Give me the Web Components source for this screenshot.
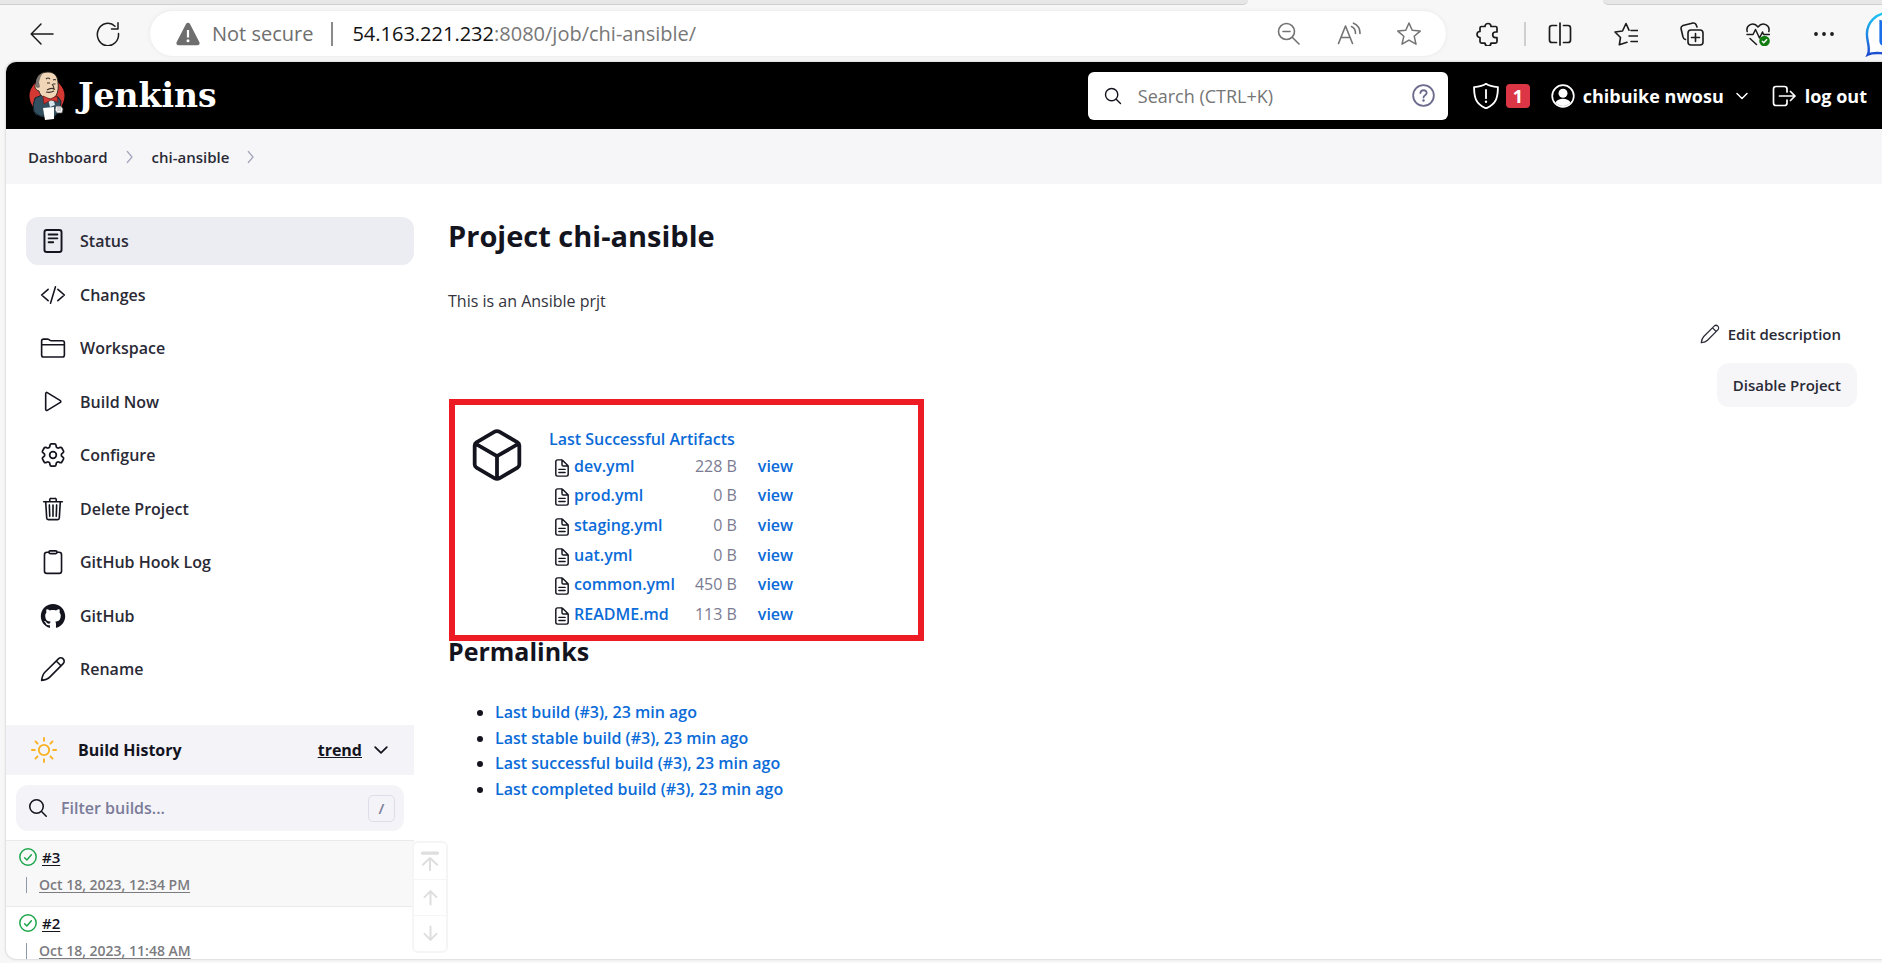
<!DOCTYPE html>
<html lang="en">
<head>
<meta charset="utf-8">
<title>chi-ansible [Jenkins]</title>
<style>
html,body{margin:0;height:100%}
body{font-family:"Open Sans","Noto Sans",sans-serif;font-size:16px;color:#14141f;background:#f7f7f7;overflow:hidden}
</style>
</head>
<body>
<app-window></app-window>
<script>
const S=(w,d)=>`<g fill="none" stroke="currentColor" stroke-width="${w}" stroke-linecap="round" stroke-linejoin="round">${d}</g>`;
const ICONS={
 back:['0 0 24 24',S(1.5,'<path d="M23 12H1.500M11 2 1.200 12 11 22"/>')],
 reload:['0 0 24 24',S(1.5,'<path d="M22.500 11.500A10.600 11.200 0 1 1 19 4.200M22 .8V7H15.500"/>')],
 warn:['0 0 24 24','<path fill="currentColor" d="M12 .8c.9 0 1.500.4 2 1.200l9.300 18c.8 1.600-.1 3.200-1.900 3.200H2.600C.8 23.200-.1 21.600.7 20L10 2c.5-.8 1.100-1.200 2-1.200z"/><path d="M12 8v7.500" stroke="#fff" stroke-width="2.200"/><circle cx="12" cy="18.700" r="1.500" fill="#fff"/>'],
 zoomout:['0 0 24 24',S(1.6,'<circle cx="9.500" cy="9.500" r="8"/><path d="M6 9.500h7M15.500 15.500 22 22"/>')],
 readaloud:['0 0 24 24',S(1.6,'<path d="M1.500 21.500 8.500 4l7 17.500M4 15.500h9M14.500 4.500c2.500 1 4 3.500 4 7M16.500 1.200c4.500 1.800 6.500 5.500 6.500 10.300"/>')],
 star:['0 0 24 24',S(1.5,'<path d="m12 1 3.200 7.300 8 .8-6 5.200 1.800 7.900-7-4.100-7 4.100 1.800-7.900-6-5.200 8-.8z"/>')],
 puzzle:['0 0 24 24',S(1.7,'<path d="M9 4.500a3 3 0 0 1 6 0h4.500q1.500 0 1.500 1.500v4h-1.500a2.800 2.800 0 0 0 0 5.600H21v4q0 1.500-1.500 1.500H15a3 3 0 0 1-6 0H5.500Q4 21.100 4 19.600V15.500a3 3 0 0 1 0-6V6q0-1.500 1.500-1.500z"/>')],
 split:['0 0 24 24',S(1.7,'<path d="M12 1v22M8.500 3.500H4Q1.500 3.500 1.500 6v12q0 2.500 2.500 2.500h4.500M15.500 3.500H20q2.500 0 2.500 2.500v12q0 2.500-2.500 2.500h-4.500"/>')],
 favs:['0 0 24 24',S(1.6,'<path d="M13 20.200 5.300 22.800 6.500 15.500 1 10l7.500-1L12 1.500l3 6.700M17 8.500h6.500M15 14h8.500M17 19.500h6.500"/>')],
 collections:['0 0 24 24',S(1.6,'<rect x="8" y="8" width="15" height="15" rx="3"/><path d="M15.500 11.500v8M11.500 15.500h8M5.500 17.500C3.500 17 3.300 16 3 15L1 6.500Q.8 4.500 3 3.500L13 1q2-.3 3 1.500l1 2.500"/>')],
 heart:['0 0 24 24',S(1.5,'<path d="M1.200 9.500C-.5 3 7.500-.8 12 5c4.500-5.800 12.500-2 10.800 4.500M1 12.500h6l2.500-5 4 8.500 3-6 1 2.500h6M4 16.500l6.500 6"/>')+'<circle cx="18.500" cy="19" r="5.300" fill="#107c10"/><path d="m16 19 1.800 1.800 3.200-3.500" fill="none" stroke="#fff" stroke-width="1.400"/>'],
 dots:['0 0 24 24','<g fill="currentColor"><circle cx="4" cy="12" r="1.900"/><circle cx="12" cy="12" r="1.900"/><circle cx="20" cy="12" r="1.900"/></g>'],
 bing:['0 0 48 48','<defs><linearGradient id="b" x1="0" y1="0" x2="0" y2="1"><stop offset="0" stop-color="#1fc8f5"/><stop offset="1" stop-color="#1b4bd0"/></linearGradient></defs><path d="M24 2a22 22 0 0 1 0 42c-6 1-14-2-21 1.500C6 39 2 33 2 24A22 22 0 0 1 24 2z" fill="#fff" stroke="url(#b)" stroke-width="2.500"/><path d="M15 9l8 3v25l-5-1q-3-1-3-5z" fill="#1a6fe8"/>'],
 search:['0 0 512 512',S(36,'<path d="M221.090 64a157.090 157.090 0 1 0 157.090 157.090A157.100 157.100 0 0 0 221.090 64zM338.290 338.290 448 448"/>')],
 help:['0 0 24 24',S(1.9,'<circle cx="12" cy="12" r="10.800"/><path d="M8.800 9.400c.3-4 6.700-3.700 6.500 0-.1 2.400-3.300 2.300-3.300 4.800"/>')+'<circle cx="12" cy="17.300" r="1.300" fill="currentColor"/>'],
 shield:['0 0 24 24',S(1.7,'<path d="M12 .8C9 3 5 3.600 1 3.800c0 9 1 15 11 19.700 10-4.700 11-10.700 11-19.700C19 3.600 15 3 12 .8zM12 6.500v7.500"/>')+'<circle cx="12" cy="17.300" r="1.100" fill="currentColor"/>'],
 user:['0 0 24 24',S(1.7,'<circle cx="12" cy="12" r="10.800"/>')+'<circle cx="12" cy="9.300" r="4.500" fill="currentColor"/><path d="M4.500 18.500c2.500-5 12.500-5 15 0A10 10 0 0 1 4.500 18.500z" fill="currentColor"/>'],
 down:['0 0 24 24',S(3,'<path d="m2 7 10 10L22 7"/>')],
 right:['0 0 512 512',S(40,'<path d="m170 80 150 176-150 176"/>')],
 logout:['0 0 24 24',S(1.7,'<path d="M15 8V5q0-2.500-2.500-2.500H4Q1.500 2.500 1.500 5v14q0 2.500 2.500 2.500h8.500Q15 21.500 15 19v-3M7.500 12H23M18.500 7.500 23 12l-4.500 4.500"/>')],
 reader:['0 0 512 512',S(38,'<rect x="88" y="38" width="336" height="436" rx="44"/><path d="M170 128h172M170 204h172M170 280h90"/>')],
 code:['0 0 512 512',S(32,'<path d="M160 368 32 256l128-112M352 368l128-112-128-112M304 96l-96 320"/>')],
 folder:['0 0 512 512',S(32,'<path d="M440 432H72a40 40 0 0 1-40-40V120a40 40 0 0 1 40-40h75.890a40 40 0 0 1 22.190 6.720l27.840 18.560A40 40 0 0 0 220.110 112H440a40 40 0 0 1 40 40v240a40 40 0 0 1-40 40zM32 192h448"/>')],
 play:['0 0 512 512',S(32,'<path d="M112 91v310c0 17.440 17 28.520 31 20.160l257.900-158.370c12.120-7.250 12.120-26.330 0-33.580L143 70.840c-14-8.360-31 2.720-31 20.160z"/>')],
 gear:['1.500 1.500 21 21',S(1.4,'<path d="M9.594 3.940c.09-.542.56-.94 1.110-.94h2.593c.55 0 1.020.398 1.110.94l.213 1.281c.063.374.313.686.645.87.074.04.147.083.22.127.324.196.72.257 1.075.124l1.217-.456a1.125 1.125 0 0 1 1.370.49l1.296 2.247a1.125 1.125 0 0 1-.26 1.431l-1.003.827c-.293.24-.438.613-.431.992a6.759 6.759 0 0 1 0 .255c-.007.378.138.75.43.99l1.005.828c.424.35.534.954.26 1.430l-1.298 2.247a1.125 1.125 0 0 1-1.369.491l-1.217-.456c-.355-.133-.75-.072-1.076.124a6.570 6.570 0 0 1-.22.128c-.331.183-.581.495-.644.869l-.213 1.280c-.09.543-.56.941-1.110.941h-2.594c-.55 0-1.020-.398-1.110-.94l-.213-1.281c-.062-.374-.312-.686-.644-.87a6.520 6.520 0 0 1-.22-.127c-.325-.196-.72-.257-1.076-.124l-1.217.456a1.125 1.125 0 0 1-1.369-.49l-1.297-2.247a1.125 1.125 0 0 1 .26-1.431l1.004-.827c.292-.24.437-.613.43-.992a6.932 6.932 0 0 1 0-.255c.007-.378-.138-.75-.43-.99l-1.004-.828a1.125 1.125 0 0 1-.26-1.430l1.297-2.247a1.125 1.125 0 0 1 1.370-.491l1.216.456c.356.133.751.072 1.076-.124.072-.044.146-.087.22-.128.332-.183.582-.495.644-.869l.214-1.281z"/><circle cx="12" cy="12" r="2.700"/>')],
 trash:['0 0 512 512',S(32,'<path d="m112 112 20 320c.95 18.490 14.400 32 32 32h184c17.670 0 30.870-13.510 32-32l20-320M72 112h368M192 112V72a23.930 23.930 0 0 1 24-24h80a23.930 23.930 0 0 1 24 24v40M256 176v224M184 176l8 224M328 176l-8 224"/>')],
 clipboard:['0 0 512 512',S(32,'<path d="M336 64h40a48 48 0 0 1 48 48v320a48 48 0 0 1-48 48H136a48 48 0 0 1-48-48V112a48 48 0 0 1 48-48h40"/><rect x="176" y="36" width="160" height="56" rx="26"/>')],
 github:['-.8 -.8 25.600 25.600','<path fill="currentColor" d="M12 .297c-6.630 0-12 5.373-12 12 0 5.303 3.438 9.800 8.205 11.385.6.113.82-.258.82-.577 0-.285-.01-1.040-.015-2.040-3.338.724-4.042-1.610-4.042-1.610C4.422 18.070 3.633 17.700 3.633 17.700c-1.087-.744.084-.729.084-.729 1.205.084 1.838 1.236 1.838 1.236 1.070 1.835 2.809 1.305 3.495.998.108-.776.417-1.305.76-1.605-2.665-.3-5.466-1.332-5.466-5.930 0-1.310.465-2.380 1.235-3.220-.135-.303-.54-1.523.105-3.176 0 0 1.005-.322 3.300 1.230.96-.267 1.980-.399 3-.405 1.020.006 2.040.138 3 .405 2.280-1.552 3.285-1.230 3.285-1.230.645 1.653.24 2.873.12 3.176.765.84 1.230 1.910 1.230 3.220 0 4.610-2.805 5.625-5.475 5.920.42.36.81 1.096.81 2.220 0 1.606-.015 2.896-.015 3.286 0 .315.21.69.825.57C20.565 22.092 24 17.592 24 12.297c0-6.627-5.373-12-12-12"/>'],
 pencil:['0 0 24 24',S(1.5,'<path d="M1.500 22.500C2 19 3 16.500 4.500 15L17 2.600a3.100 3.100 0 0 1 4.400 4.400L9 19.500c-1.500 1.500-4 2.500-7.500 3zM15 4.600 19.400 9"/>')],
 sun:['0 0 24 24',S(1.7,'<circle cx="12" cy="12" r="4.800"/><path d="M12 .9v2.600M12 20.500v2.600M.9 12h2.600M20.500 12h2.600M4.100 4.100 6 6M18 18l1.900 1.900M4.100 19.900 6 18M18 6l1.900-1.900"/>')],
 ok:['0 0 24 24',S(2,'<circle cx="12" cy="12" r="10.900"/><path d="m7.500 13 3 3 6-7"/>')],
 doc:['84 36 344 440',S(36,'<path d="M408 215V412a44 44 0 0 1-44 44H148a44 44 0 0 1-44-44V100a44 44 0 0 1 44-44h100a32 32 0 0 1 20 8l132 132a32 32 0 0 1 8 19zM256 60v116a32 32 0 0 0 32 32h114M180 290h152M180 368h152"/>')],
 cube:['32 24 448 464',S(34,'<path d="M456 341.370V170.610A32 32 0 0 0 440 143l-160-94a47.940 47.940 0 0 0-48.240 0L72 143a32 32 0 0 0-16 27.610v170.760A32 32 0 0 0 72 369l160 94a48 48 0 0 0 48.240 0l160-94A32 32 0 0 0 456 341.370zM62 155l194 112 194-112M256 470V267"/>')],
 top:['0 0 24 24',S(2.4,'<path d="M3 2.500h18" stroke-width="4"/><path d="M12 9v14M3.500 16.500 12 8.500l8.500 8"/>')],
 up:['0 0 24 24',S(2.8,'<path d="M12 3v19M3.500 11.500 12 3l8.500 8.500"/>')],
 downarrow:['0 0 24 24',S(2.8,'<path d="M12 2v19M3.500 12.500 12 21l8.500-8.500"/>')],
 butler:['0 0 36 50',`<ellipse cx="18" cy="25" rx="17.500" ry="17.500" fill="#d33833"/>
 <path d="M7 35 6 43l7 3 12 1 4-6 1-8z" fill="#335061"/>
 <path d="M13 24 6 27q-3 7-1 14l6 4 14 1 6-7 1-9-3-4-7-2z" fill="#335061" stroke="#14222b"/>
 <path d="M7 12C8 4 13 1 19 1c7 0 10 5 10 11 1 7-1 15-7 16-6 0-11-3-12-8-4-1-5-5-3-8z" fill="#f0d6b7" stroke="#26211d" stroke-width=".9"/>
 <path d="M7 12c0-5 3-9 7-10-3 4-3 6-4 9l1 5-2 1c-2 0-3-3-2-5z" fill="#7d7470"/>
 <path d="M17 8q2-2 4 0M24 9q2-1 3 0M18 12h3M24 13h2.500M23 13q3 4 1 5M17 21q4 1 8-1M18 19q4-3 8-.500" fill="none" stroke="#3a302a" stroke-width="1.100"/>
 <path d="m19 28 5-1 2 7-5 2z" fill="#d7e4ea"/>
 <path d="m14 25 7 3 7-3 1 6-7-2-7 4z" fill="#d33833" stroke="#701814" stroke-width=".7"/>
 <path d="m14 37 11-1v12l-9 1z" fill="#fff"/><path d="M27 35h5l2 3-1 4-5 0-2-3z" fill="#f3f3f3" stroke="#555" stroke-width=".7"/><path d="M29 35v5M31 35v5" stroke="#888" stroke-width=".6"/>`]
};
const define=(name,html,setup)=>{
  const t=document.createElement('template');
  t.innerHTML='<style>*{box-sizing:border-box}a{color:inherit;text-decoration:none}button{font:inherit;color:inherit;background:none;border:0;padding:0;margin:0;display:inline-flex;align-items:center;flex:none}ul{list-style:none;margin:0;padding:0}</style>'+html;
  customElements.define(name,class extends HTMLElement{
    constructor(){super();this.attachShadow({mode:'open'}).append(t.content.cloneNode(true));}
    connectedCallback(){if(setup)setup(this,this.shadowRoot);}
  });
};

define('ui-icon','<style>:host{display:inline-flex;flex:none}svg{display:block;width:100%;height:100%}</style><svg aria-hidden="true"></svg>',(el,r)=>{
  const [box,art]=ICONS[el.getAttribute('name')];
  const s=el.getAttribute('size')||24;
  el.style.width=s+'px';el.style.height=(el.getAttribute('tall')||s)+'px';
  const svg=r.querySelector('svg');svg.setAttribute('viewBox',box);svg.innerHTML=art;
});

define('tab-strip',`<style>
:host{display:flex;height:5px;justify-content:space-between}
i{background:#e7e7e7;border-bottom:1px solid #cfcfcf}
.l{width:66.300%;border-bottom-right-radius:5px}.r{width:14.800%;border-bottom-left-radius:5px}
</style><i class="l"></i><i class="r"></i>`);

define('browser-bar',`<style>
:host{display:flex;align-items:center;height:57px;overflow:hidden;padding-left:30px;color:#1b1b1b}
.nav{display:flex;gap:42px;margin-right:30px}
.pill{flex:1;display:flex;align-items:center;height:45px;background:#fff;border-radius:23px;padding:0 25px 0 26px;font-size:20px;line-height:28px;color:#6e6e6e;box-shadow:0 0 4px #e6e6e6}
.ns{margin-left:12px}
.bar{width:2px;height:24px;background:#8a8a8a;margin:0 19px 0 18px}
.url{flex:1;display:flex;color:#777}.url b{font-weight:400;color:#111}
.in{display:flex;gap:36px;color:#737373}
.tools{display:flex;align-items:center;margin-left:30px;gap:42px}
.tools .sep{width:2px;height:24px;background:#cfcfcf;margin:0 -20px 0 -18px}
.bing{width:17px;margin-left:29px;overflow:hidden}
</style>
<div class="nav"><button aria-label="Back"><ui-icon name="back"></ui-icon></button><button aria-label="Reload"><ui-icon name="reload"></ui-icon></button></div>
<div class="pill"><ui-icon name="warn"></ui-icon><span class="ns">Not secure</span><span class="bar"></span><span class="url"><b>54.163.221.232</b><span>:8080/job/chi-ansible/</span></span>
<span class="in"><button aria-label="Zoom out"><ui-icon name="zoomout"></ui-icon></button><button aria-label="Read aloud"><ui-icon name="readaloud"></ui-icon></button><button aria-label="Favourite"><ui-icon name="star"></ui-icon></button></span></div>
<div class="tools"><button aria-label="Extensions"><ui-icon name="puzzle"></ui-icon></button><span class="sep"></span><button aria-label="Split screen"><ui-icon name="split"></ui-icon></button><button aria-label="Favourites"><ui-icon name="favs"></ui-icon></button><button aria-label="Collections"><ui-icon name="collections"></ui-icon></button><button aria-label="Health"><ui-icon name="heart"></ui-icon></button><button aria-label="More"><ui-icon name="dots"></ui-icon></button></div>
<button class="bing" aria-label="Chat"><ui-icon name="bing" size="46"></ui-icon></button>`);

define('jenkins-header',`<style>
:host{display:flex;align-items:center;height:67px;background:#000;color:#fff;padding:0 15px 0 23px;font-size:18px;line-height:24px;font-weight:700}
.logo{display:flex;align-items:center;gap:13px;margin-right:auto;font:bold 33px/44px "DejaVu Serif",serif}
.find{display:flex;align-items:center;width:360px;height:48px;background:#fff;border-radius:6px;padding:0 13px 0 15px;color:#14141f;margin-right:25px}
input{flex:1;min-width:0;border:0;background:none;font:400 18px/24px "Open Sans",sans-serif;margin-left:15px;padding:0;outline:0}
input::placeholder{color:#757575;opacity:1}
.help{color:#6b6b8e}
.badge{background:#dc3545;border-radius:4px;width:24px;height:24px;text-align:center;margin-left:7px}
.user{margin-left:21px;gap:8px;display:flex;align-items:center}.user ui-icon:last-child{margin-left:4px}
.out{margin-left:24px;gap:9px;display:flex;align-items:center}
.sh{display:flex;align-items:center}
</style>
<a class="logo" href="#"><ui-icon name="butler" size="36" tall="50"></ui-icon>Jenkins</a>
<label class="find"><ui-icon name="search" size="20"></ui-icon><input type="search" aria-label="Search" placeholder="Search (CTRL+K)"><ui-icon class="help" name="help" size="23"></ui-icon></label>
<a class="sh" href="#"><ui-icon name="shield" size="26"></ui-icon><span class="badge">1</span></a>
<a class="user" href="#"><ui-icon name="user"></ui-icon>chibuike nwosu<ui-icon name="down" size="12"></ui-icon></a>
<a class="out" href="#"><ui-icon name="logout"></ui-icon>log out</a>`);

define('bread-crumbs',`<style>
:host{display:flex;align-items:center;height:55px;padding-left:22px;background:#f6f6f9;font-size:15px;line-height:24px;font-weight:600;gap:14px}
ui-icon{color:#a5a5bb}
a{color:#2a2a36}
</style><a href="#">Dashboard</a><ui-icon name="right" size="16"></ui-icon><a href="#">chi-ansible</a><ui-icon name="right" size="16"></ui-icon>`);

define('side-task',`<style>
:host{display:block}
a{display:flex;align-items:center;gap:14px;height:48px;padding-left:14px;border-radius:12px;font-size:16px;line-height:24px;font-weight:600}
span{color:#2a2a36}
:host([active]) a{background:#ecedf3}
</style><a href="#"><span><slot></slot></span></a>`,(el,r)=>{
  const n=document.createElement('ui-icon');
  n.setAttribute('name',el.getAttribute('icon'));n.setAttribute('size','26');r.querySelector('a').prepend(n);
});

define('build-row',`<style>
:host{display:block;height:66px;border-top:1px solid #eaeaec;padding:4px 13px 0}
:host([shade]){background:#f8f8f8}
div{display:flex;align-items:center;height:24px}
.a{font-size:15px;font-weight:600;gap:5px}.a ui-icon{color:#1ea64b}
.b{font-size:14px;color:#7b7b80;font-weight:600;margin-top:4px}
.b i{width:1px;height:16px;background:#8d99a6;margin:0 12px 0 7px}
a{text-decoration:underline;line-height:20px;text-underline-offset:2px}
</style><div class="a"><ui-icon name="ok" size="18"></ui-icon><a href="#"><slot></slot></a></div>
<div class="b"><i></i><a href="#"><slot name="date"></slot></a></div>`);

define('build-history',`<style>
:host{display:block}
header{display:flex;align-items:center;height:50px;background:#f3f3f8;padding:0 26px 0 25px;font-size:16px;line-height:24px;font-weight:700}
header a{text-decoration:underline;margin-left:auto;margin-right:12px}
.sun{color:#fbb11f;margin-right:21px}
label{display:flex;align-items:center;height:46px;margin:10px 10px 9px;padding:0 9px 0 11px;background:#f3f3f8;border-radius:12px}
input{flex:1;min-width:0;border:0;background:none;outline:0;padding:0;margin-left:12px;font:600 16px/24px "Open Sans",sans-serif}
input::placeholder{color:#7b7b99;opacity:1}
kbd{width:27px;height:27px;border:1px solid #dedee8;border-radius:5px;font:600 15px/24px "Open Sans",sans-serif;text-align:center;color:#7b7b99}
</style>
<header><ui-icon class="sun" name="sun" size="26"></ui-icon>Build History<a href="#">trend</a><ui-icon name="down" size="14"></ui-icon></header>
<label><ui-icon name="search" size="22"></ui-icon><input type="search" aria-label="Filter builds" placeholder="Filter builds..."><kbd>/</kbd></label>
<slot></slot>`);

define('history-pager',`<style>
:host{display:block;width:36px;border:2px solid #f5f5f5;border-radius:6px;background:#fff;color:#dedede}
button{display:flex;width:100%;height:36px;justify-content:center}button+button{border-top:1px solid #f5f5f5}
</style><button aria-label="Newest"><ui-icon name="top" size="20"></ui-icon></button><button aria-label="Newer"><ui-icon name="up" size="17"></ui-icon></button><button aria-label="Older"><ui-icon name="downarrow" size="17"></ui-icon></button>`);

define('side-panel',`<style>
:host{display:block;width:408px;position:relative}
nav{display:flex;flex-direction:column;justify-content:space-between;height:476px;margin:33px 0 32px 20px}
history-pager{position:absolute;left:406px;top:657px}
</style>
<nav><side-task icon="reader" active>Status</side-task><side-task icon="code">Changes</side-task><side-task icon="folder">Workspace</side-task><side-task icon="play">Build Now</side-task><side-task icon="gear">Configure</side-task><side-task icon="trash">Delete Project</side-task><side-task icon="clipboard">GitHub Hook Log</side-task><side-task icon="github">GitHub</side-task><side-task icon="pencil">Rename</side-task></nav>
<build-history><build-row shade>#3<span slot="date">Oct 18, 2023, 12:34 PM</span></build-row><build-row>#2<span slot="date">Oct 18, 2023, 11:48 AM</span></build-row></build-history>
<history-pager></history-pager>`);

define('artifact-list',`<style>
:host{display:flex;width:475px;height:242px;border:6px solid #ed1c24;padding:20px 0 0 17px;margin-left:1px}
.t{display:block;font-size:16px;line-height:28px;font-weight:600;color:#0b6bd8}
.c{margin:4px 27px 0 0}
table{border-collapse:collapse;font-size:16px;line-height:24px;height:178px;margin:-2px 0 0 6px}
td{padding:0;white-space:nowrap}td:nth-child(2){text-align:right;color:#7b7b91;width:62px}
td:last-child{padding-left:21px}
a{color:#0b6bd8;font-weight:600}td ui-icon{margin-right:5px;vertical-align:-5px}
</style><ui-icon class="c" name="cube" size="50" tall="52"></ui-icon><div><a class="t" href="#">Last Successful Artifacts</a><table><tbody></tbody></table></div>`,(el,r)=>{
  r.querySelector('tbody').innerHTML=[['dev.yml','228 B'],['prod.yml','0 B'],['staging.yml','0 B'],['uat.yml','0 B'],['common.yml','450 B'],['README.md','113 B']]
  .map(([n,s])=>`<tr><td><ui-icon name="doc" size="14" tall="18"></ui-icon><a href="#">${n}</a></td><td>${s}</td><td><a href="#">view</a></td></tr>`).join('');
});

define('perma-links',`<style>
:host{display:block}
h2{margin:0;font-size:25px;line-height:20px;font-weight:700;padding-bottom:39px}
ul{list-style:disc;padding-left:47px;font-size:16px;line-height:1.6}
a{color:#0b6bd8;font-weight:600}
</style><h2>Permalinks</h2><ul><li><a href="#">Last build (#3), 23 min ago</a></li><li><a href="#">Last stable build (#3), 23 min ago</a></li><li><a href="#">Last successful build (#3), 23 min ago</a></li><li><a href="#">Last completed build (#3), 23 min ago</a></li></ul>`);

define('project-main',`<style>
:host{display:block;flex:1;padding:32px 25px 0 34px}
h1{margin:0;font-size:29px;line-height:40px;font-weight:700}
p{margin:33px 0 0;font-size:16px;line-height:24px;color:#33333d}
.acts{display:flex;flex-direction:column;align-items:flex-end;gap:17px;height:86px;font-size:15px;line-height:24px;font-weight:600;color:#2a2a36}
.edit{gap:8px;margin-right:16px;margin-top:9px}
.dis{height:44px;padding:0 16px;border-radius:12px;background:#f6f6f9}
</style><h1>Project chi-ansible</h1><p>This is an Ansible prjt</p>
<div class="acts"><button class="edit"><ui-icon name="pencil" size="20"></ui-icon>Edit description</button><button class="dis">Disable Project</button></div>
<artifact-list></artifact-list><perma-links></perma-links>`);

define('app-window',`<style>
:host{display:flex;flex-direction:column;height:100vh}
.page{flex:1;min-height:0;margin:0 0 4px 6px;background:#fff;border-radius:10px 0 0 10px;overflow:hidden;box-shadow:0 0 2px 1px #dcdcdc}
main{display:flex;align-items:flex-start}
</style><tab-strip></tab-strip><browser-bar></browser-bar>
<div class="page"><jenkins-header></jenkins-header><bread-crumbs></bread-crumbs><main><side-panel></side-panel><project-main></project-main></main></div>`);
</script>
</body>
</html>
